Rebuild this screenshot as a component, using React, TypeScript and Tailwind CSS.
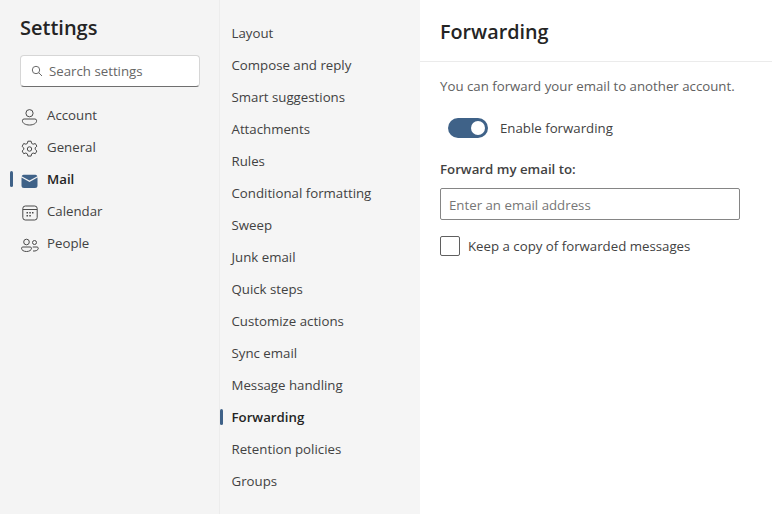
import { ReactNode } from "react";

const font = { fontFamily: '"Open Sans", sans-serif' };

const subNav = [
  "Layout",
  "Compose and reply",
  "Smart suggestions",
  "Attachments",
  "Rules",
  "Conditional formatting",
  "Sweep",
  "Junk email",
  "Quick steps",
  "Customize actions",
  "Sync email",
  "Message handling",
  "Forwarding",
  "Retention policies",
  "Groups",
];

const AccountIcon = () => (
  <svg width="18" height="18" viewBox="0 0 18 18" fill="none" stroke="#4a4a4a" strokeWidth="1">
    <circle cx="8.500" cy="5.200" r="3.600" />
    <path d="M3.100 11h10.800a1.700 1.700 0 0 1 1.700 1.700c0 2.600-3.100 4.300-7.100 4.300s-7.100-1.700-7.100-4.300A1.700 1.700 0 0 1 3.100 11z" />
  </svg>
);

const GearIcon = () => (
  <svg width="18" height="18" viewBox="0 0 18 18" fill="none" stroke="#4a4a4a" strokeWidth="1" strokeLinejoin="round">
    <circle cx="8.500" cy="9" r="2.200" />
    <path d="M6.900 1.200h3.200l.5 2.200 1.500.8 2.200-.7 1.600 2.700-1.700 1.600v1.600l1.700 1.600-1.600 2.700-2.200-.7-1.500.9-.5 2.200H6.900l-.5-2.200-1.500-.9-2.200.7-1.600-2.700 1.700-1.600V8L1.100 6.400l1.600-2.900 2.200.7 1.500-.8z" />
  </svg>
);

const MailIcon = () => (
  <svg width="18" height="18" viewBox="0 0 18 18">
    <path d="M2.500 2.800h12a2.500 2.500 0 0 1 1.900 1.500L8.500 8.600.6 4.300a2.500 2.500 0 0 1 1.900-1.500z" fill="#3f6288" />
    <path d="M.5 5.600l8 4.400 8-4.400v7.900a2.500 2.500 0 0 1-2.500 2.500H3a2.500 2.500 0 0 1-2.500-2.500z" fill="#3f6288" />
  </svg>
);

const CalendarIcon = () => (
  <svg width="18" height="18" viewBox="0 0 18 18" fill="none">
    <rect x="1.800" y="2" width="14.400" height="14" rx="2.500" stroke="#4a4a4a" />
    <path d="M2 5.500h14" stroke="#4a4a4a" />
    <g fill="#4a4a4a">
      <rect x="5.500" y="8" width="1.500" height="1.500" />
      <rect x="8.300" y="8" width="1.500" height="1.500" />
      <rect x="11" y="8" width="1.500" height="1.500" />
      <rect x="5.500" y="11" width="1.500" height="1.500" />
      <rect x="8.300" y="11" width="1.500" height="1.500" />
    </g>
  </svg>
);

const PeopleIcon = () => (
  <svg width="18" height="18" viewBox="0 0 18 18" fill="none" stroke="#4a4a4a" strokeWidth="1">
    <circle cx="5.500" cy="6" r="2.800" />
    <circle cx="13.500" cy="6.500" r="2" />
    <path d="M1.800 11h7.400c.8 0 1.300.5 1.300 1.200 0 2-2.200 3.300-5 3.300s-5-1.300-5-3.300c0-.7.600-1.200 1.300-1.200z" />
    <path d="M12 15c2.800.3 5.300-.8 5.300-2.800 0-.7-.5-1.200-1.200-1.200h-4.400" />
  </svg>
);

const SearchIcon = () => (
  <svg width="12" height="12" viewBox="0 0 12 12" fill="none" stroke="#6b6b6b" strokeWidth="1">
    <circle cx="5" cy="5" r="3.700" />
    <path d="M7.700 7.700 11 11" />
  </svg>
);

const MainItem = ({ icon, label, active }: { icon: ReactNode; label: string; active?: boolean }) => (
  <div className="relative flex h-8 items-center pl-[21px]">
    {active && <span className="absolute left-[10px] top-[8px] h-[16px] w-[3px] rounded-sm bg-[#3f6288]" />}
    <span className="flex w-[26px] shrink-0 pt-[3px]">{icon}</span>
    <span className={active ? "pt-[2px] font-semibold text-[#242424]" : "pt-[2px] text-[#424242]"}>{label}</span>
  </div>
);

export default function App() {
  return (
    <div style={font} className="flex h-[514px] w-[772px] overflow-hidden bg-white text-[13.25px] text-[#424242]">
      <aside className="w-[219px] shrink-0 bg-[#f4f4f4]">
        <h1 className="ml-5 mt-[13px] text-[20px] leading-[30px] font-semibold text-[#242424]">Settings</h1>
        <div className="ml-5 mt-[12px] flex h-8 w-[180px] items-center rounded-[4px] border border-[#d6d6d6] border-b-[#6f6f6f] bg-white pl-[10px]">
          <SearchIcon />
          <span className="ml-[6px] pt-[2px] text-[#666666]">Search settings</span>
        </div>
        <nav className="mt-[12px]">
          <MainItem icon={<AccountIcon />} label="Account" />
          <MainItem icon={<GearIcon />} label="General" />
          <MainItem icon={<MailIcon />} label="Mail" active />
          <MainItem icon={<CalendarIcon />} label="Calendar" />
          <MainItem icon={<PeopleIcon />} label="People" />
        </nav>
      </aside>

      <nav className="w-[201px] shrink-0 border-l border-[#ececec] bg-[#f5f5f5] pt-[17px]">
        {subNav.map((item) => (
          <div key={item} className="relative flex h-8 items-center pl-[11.5px]">
            {item === "Forwarding" && (
              <span className="absolute left-0 top-[8px] h-[16px] w-[3px] rounded-sm bg-[#3f6288]" />
            )}
            <span className={item === "Forwarding" ? "pt-[2px] font-semibold text-[#242424]" : "pt-[2px]"}>{item}</span>
          </div>
        ))}
      </nav>

      <main className="flex-1">
        <header className="flex h-[62px] items-center border-b border-[#ebebeb] pl-5">
          <h2 className="pt-[2px] text-[19.75px] font-semibold text-[#242424]">Forwarding</h2>
        </header>
        <div className="pl-5">
          <p className="mt-[14px] leading-5 text-[#616161]">You can forward your email to another account.</p>
          <div className="mt-[22px] ml-2 flex h-5 items-center">
            <div className="flex h-5 w-10 items-center justify-end rounded-full bg-[#3f6288] pr-[3px]">
              <span className="h-[14px] w-[14px] rounded-full bg-white" />
            </div>
            <span className="ml-3 pt-[2px]">Enable forwarding</span>
          </div>
          <div className="mt-[21px] leading-5 font-semibold">Forward my email to:</div>
          <div className="mt-[9px] flex h-8 w-[300px] items-center rounded-[2px] border border-[#858585] pl-2 pt-[4px] text-[#767676]">
            Enter an email address
          </div>
          <div className="mt-[16px] flex h-5 items-center">
            <span className="h-5 w-5 rounded-[2px] border border-[#5f5f5f]" />
            <span className="ml-2 pt-[2px]">Keep a copy of forwarded messages</span>
          </div>
        </div>
      </main>
    </div>
  );
}
